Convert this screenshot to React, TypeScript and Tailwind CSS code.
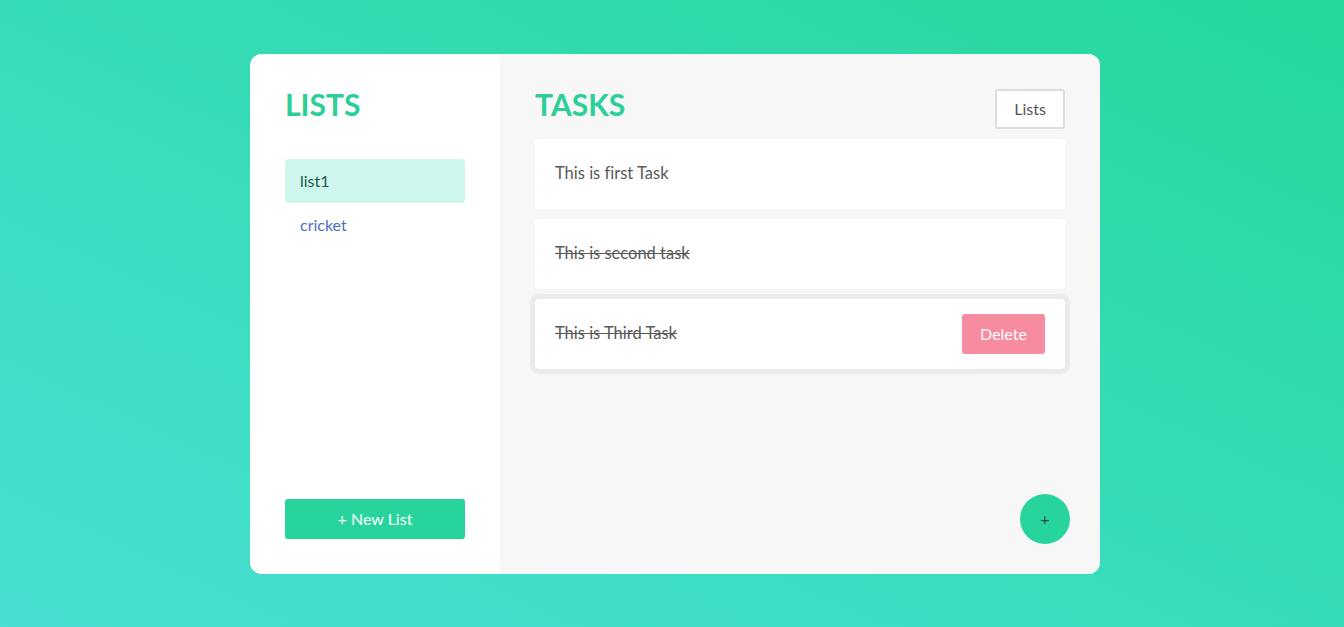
export default function App() {
  const tasks = [
    { id: 1, text: "This is first Task", done: false, focused: false },
    { id: 2, text: "This is second task", done: true, focused: false },
    { id: 3, text: "This is Third Task", done: true, focused: true },
  ];

  return (
    <div
      className="w-full h-[627px] flex items-center justify-center pl-[6px] bg-gradient-to-tr from-[#47e0d3] to-[#24d79c]"
      style={{ fontFamily: "Lato, 'Noto Sans', sans-serif" }}
    >
      <div className="w-[850px] h-[520px] flex rounded-xl overflow-hidden bg-white">
        {/* lists */}
        <div className="w-[250px] bg-white p-[35px] flex flex-col">
          <h1 className="text-[30px] leading-[32px] font-bold text-[#2ccf97] -mt-[1px]">
            LISTS
          </h1>
          <div className="mt-[39px] flex flex-col">
            <div className="h-[44px] rounded-[4px] bg-[#cdf7ec] px-[15px] flex items-center text-[16px] text-[#1d5a48]">
              list1
            </div>
            <div className="h-[44px] px-[15px] flex items-center text-[16px] text-[#4d6fc4]">
              cricket
            </div>
          </div>
          <button className="mt-auto h-[40px] w-full rounded-[3px] bg-[#28d49d] text-white text-[16px]">
            + New List
          </button>
        </div>

        {/* tasks */}
        <div className="flex-1 bg-[#f7f7f7] px-[35px] pt-[35px] pb-[30px] flex flex-col">
          <div className="flex items-start justify-between h-[50px]">
            <h1 className="text-[30px] leading-[32px] font-bold text-[#2ccf97] -mt-[1px]">
              TASKS
            </h1>
            <button className="w-[70px] h-[40px] border-2 border-[#dddddd] bg-white rounded-[3px] text-[16px] text-[#555]">
              Lists
            </button>
          </div>
          <div className="flex flex-col gap-[10px]">
            {tasks.map((t) => (
              <div
                key={t.id}
                className={`h-[70px] bg-white rounded-[4px] pl-[20px] pr-[20px] flex items-center justify-between ${
                  t.focused ? "ring-[5px] ring-[#ebebeb]" : ""
                }`}
              >
                <span
                  className={`text-[16.5px] text-[#5a5a5a] [font-variant-ligatures:none] ${
                    t.done ? "line-through" : ""
                  }`}
                >
                  {t.text}
                </span>
                {t.focused && (
                  <button className="w-[83px] h-[40px] rounded-[3px] bg-[#f78ba0] text-white text-[16px]">
                    Delete
                  </button>
                )}
              </div>
            ))}
          </div>
          <div className="mt-auto flex justify-end -mr-[5px]">
            <button className="w-[50px] h-[50px] rounded-full bg-[#28d49d] text-[#2a4a3f] text-[16px] flex items-center justify-center">
              +
            </button>
          </div>
        </div>
      </div>
    </div>
  );
}
